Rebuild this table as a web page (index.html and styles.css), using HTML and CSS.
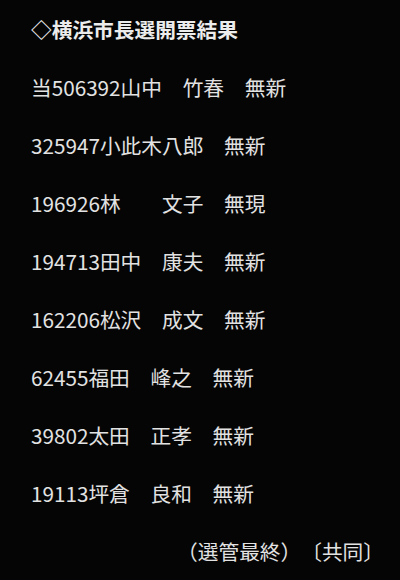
FILE: index.html
```html
<!DOCTYPE html>
<html lang="ja">
<head>
    <meta charset="UTF-8">
    <meta name="viewport" content="width=device-width, initial-scale=1.0">
    <title>横浜市長選開票結果</title>
    <link rel="stylesheet" href="styles.css">
</head>
<body>

    <div class="results">
        <h1 class="title">◇横浜市長選開票結果</h1>

        <!-- 候補者ごとの得票 -->
        <p class="row">当506392山中　竹春　無新</p>
        <p class="row">325947小此木八郎　無新</p>
        <p class="row">196926林　　文子　無現</p>
        <p class="row">194713田中　康夫　無新</p>
        <p class="row">162206松沢　成文　無新</p>
        <p class="row">62455福田　峰之　無新</p>
        <p class="row">39802太田　正孝　無新</p>
        <p class="row">19113坪倉　良和　無新</p>

        <p class="source">（選管最終）〔共同〕</p>
    </div>

</body>
</html>
```

FILE: styles.css
```css
* {
    margin: 0;
    padding: 0;
    box-sizing: border-box;
}

body {
    font-family: "Noto Sans CJK JP", "Noto Sans", sans-serif;
    background-color: #050505;
    color: #e2e2e2;
    min-height: 100vh;
}

.results {
    padding: 0 16px 0 31px;
    font-size: 20.7px;
    text-spacing-trim: space-all;
}

.title {
    font-size: 20.7px;
    font-weight: bold;
    line-height: 58px;
    color: #ececec;
}

.row {
    line-height: 58px;
    white-space: pre;
}

.source {
    line-height: 58px;
    text-align: right;
}
```
